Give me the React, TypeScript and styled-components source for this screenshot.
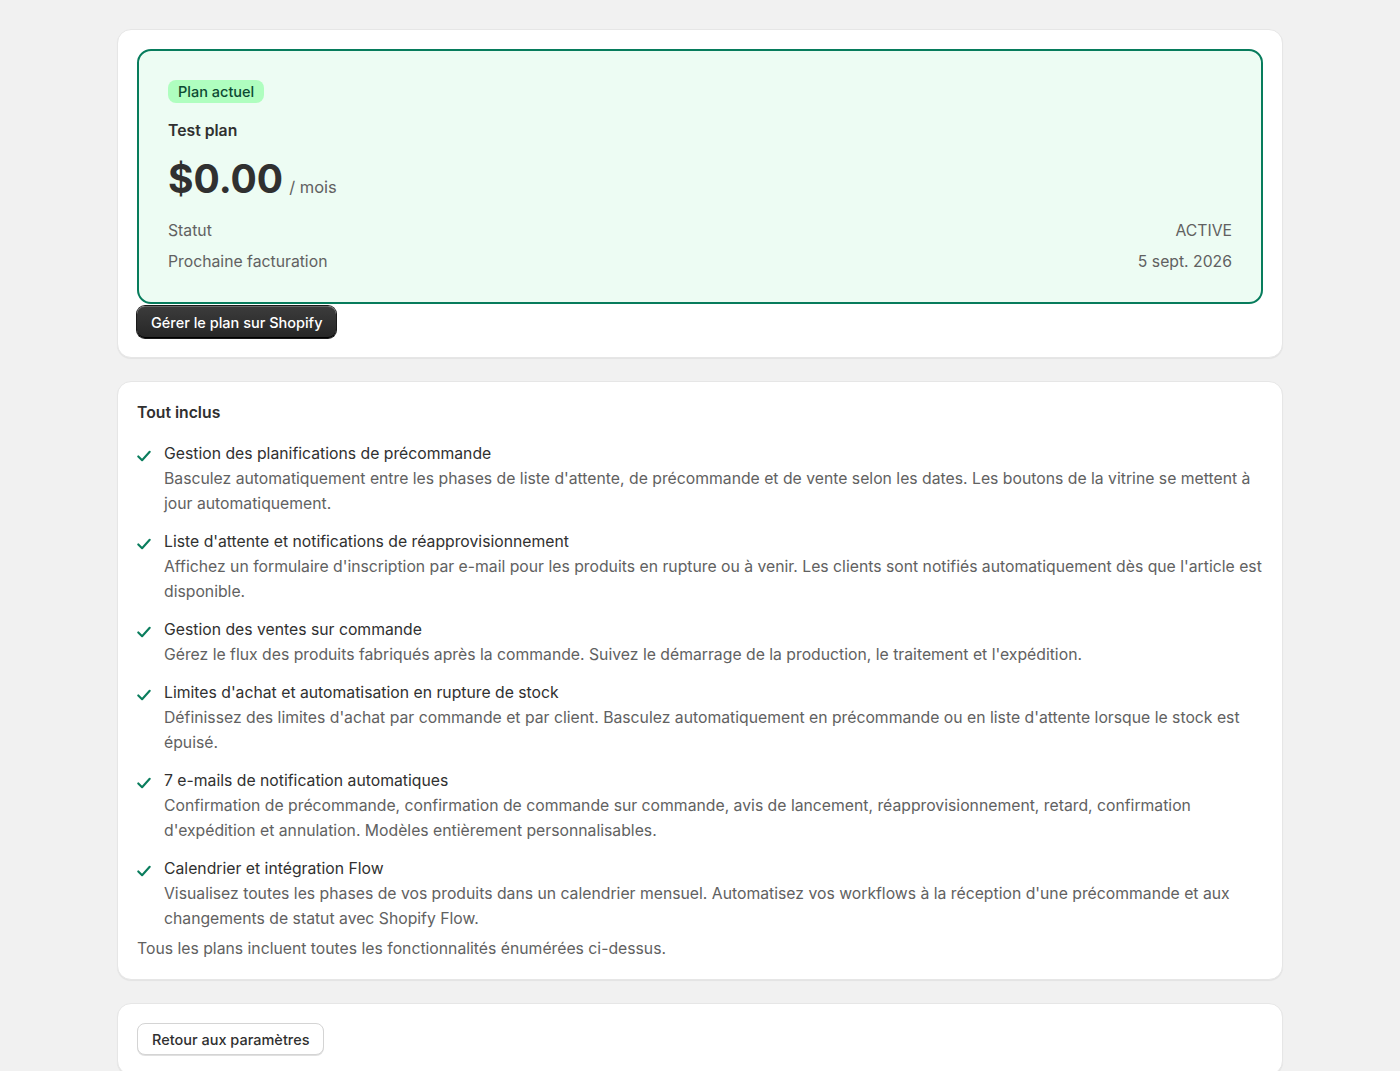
import React from 'react';
import styled, { createGlobalStyle } from 'styled-components';

const features = [
  {
    title: 'Gestion des planifications de précommande',
    text: "Basculez automatiquement entre les phases de liste d'attente, de précommande et de vente selon les dates. Les boutons de la vitrine se mettent à jour automatiquement.",
  },
  {
    title: "Liste d'attente et notifications de réapprovisionnement",
    text: "Affichez un formulaire d'inscription par e-mail pour les produits en rupture ou à venir. Les clients sont notifiés automatiquement dès que l'article est disponible.",
  },
  {
    title: 'Gestion des ventes sur commande',
    text: "Gérez le flux des produits fabriqués après la commande. Suivez le démarrage de la production, le traitement et l'expédition.",
  },
  {
    title: "Limites d'achat et automatisation en rupture de stock",
    text: "Définissez des limites d'achat par commande et par client. Basculez automatiquement en précommande ou en liste d'attente lorsque le stock est épuisé.",
  },
  {
    title: '7 e-mails de notification automatiques',
    text: "Confirmation de précommande, confirmation de commande sur commande, avis de lancement, réapprovisionnement, retard, confirmation d'expédition et annulation. Modèles entièrement personnalisables.",
  },
  {
    title: 'Calendrier et intégration Flow',
    text: "Visualisez toutes les phases de vos produits dans un calendrier mensuel. Automatisez vos workflows à la réception d'une précommande et aux changements de statut avec Shopify Flow.",
  },
];

const CheckIcon = () => (
  <svg width="14" height="14" viewBox="0 0 14 14" fill="none">
    <path d="M1.3 7.4L5.1 11.2L12.7 2.8" stroke="#0a7d5d" strokeWidth="2.1" strokeLinecap="round" strokeLinejoin="round" />
  </svg>
);

const App = () => {
  return (
    <>
      <GlobalStyle />
      <Page>
        <Card>
          <PlanBox>
            <Badge>Plan actuel</Badge>
            <PlanName>Test plan</PlanName>
            <PriceRow>
              <Price>$0.00</Price>
              <Period>/ mois</Period>
            </PriceRow>
            <InfoList>
              <InfoRow>
                <span>Statut</span>
                <span>ACTIVE</span>
              </InfoRow>
              <InfoRow>
                <span>Prochaine facturation</span>
                <span>5 sept. 2026</span>
              </InfoRow>
            </InfoList>
          </PlanBox>
          <PrimaryButton>Gérer le plan sur Shopify</PrimaryButton>
        </Card>

        <Card>
          <SectionTitle>Tout inclus</SectionTitle>
          <FeatureList>
            {features.map((item, index) => (
              <Feature key={index}>
                <IconCell>
                  <CheckIcon />
                </IconCell>
                <div>
                  <FeatureTitle>{item.title}</FeatureTitle>
                  <FeatureText>{item.text}</FeatureText>
                </div>
              </Feature>
            ))}
          </FeatureList>
          <Footnote>Tous les plans incluent toutes les fonctionnalités énumérées ci-dessus.</Footnote>
        </Card>

        <Card>
          <SecondaryButton>Retour aux paramètres</SecondaryButton>
        </Card>
      </Page>
    </>
  );
};

export default App;

// ========== Styled Components ==========

const GlobalStyle = createGlobalStyle`
  html, body {
    margin: 0;
    padding: 0;
    background: #f1f1f1;
    font-family: Inter, "Noto Sans", sans-serif;
    color: #303030;
  }
  * { box-sizing: border-box; }
`;

const Page = styled.div`
  width: 1166px;
  margin: 0 auto;
  padding-top: 29px;
  display: flex;
  flex-direction: column;
  gap: 23px;
`;

const Card = styled.div`
  background: #fff;
  border: 1px solid #e6e6e6;
  border-radius: 14px;
  box-shadow: 0 1px 1px rgba(0, 0, 0, 0.06);
  padding: 19px;
`;

const PlanBox = styled.div`
  background: #edfcf3;
  border: 2px solid #077c5c;
  border-radius: 14px;
  padding: 29px;
  display: flex;
  flex-direction: column;
  align-items: flex-start;
`;

const Badge = styled.span`
  display: inline-flex;
  align-items: center;
  height: 23px;
  padding: 0 10px;
  border-radius: 8px;
  background: #affebf;
  color: #0c4a33;
  font-size: 14.5px;
  font-weight: 500;
`;

const PlanName = styled.div`
  margin-top: 18px;
  font-size: 15.75px;
  line-height: 20px;
  font-weight: 600;
`;

const PriceRow = styled.div`
  margin-top: 10px;
  display: flex;
  align-items: baseline;
  gap: 6px;
`;

const Price = styled.span`
  font-size: 39px;
  line-height: 56px;
  font-weight: 700;
  color: #303030;
`;

const Period = styled.span`
  font-size: 16.5px;
  color: #616161;
`;

const InfoList = styled.div`
  align-self: stretch;
  margin-top: 13px;
  display: flex;
  flex-direction: column;
  gap: 9px;
`;

const InfoRow = styled.div`
  display: flex;
  justify-content: space-between;
  font-size: 15.75px;
  line-height: 22px;
  color: #616161;
`;

const PrimaryButton = styled.button`
  margin-top: 2px;
  height: 32px;
  padding: 0 14px;
  border: none;
  border-radius: 8px;
  background: linear-gradient(#3c3c3c, #262626);
  box-shadow: inset 0 1px 0 rgba(255, 255, 255, 0.22), inset 0 -1px 0 #000, 0 0 0 1px #1a1a1a;
  color: #fff;
  font-family: inherit;
  font-size: 14.5px;
  font-weight: 500;
`;

const SectionTitle = styled.div`
  font-size: 15.75px;
  line-height: 24px;
  font-weight: 600;
  color: #303030;
`;

const FeatureList = styled.div`
  margin-top: 16px;
  display: flex;
  flex-direction: column;
  gap: 13px;
`;

const Feature = styled.div`
  display: flex;
  gap: 13px;
`;

const IconCell = styled.div`
  width: 14px;
  flex-shrink: 0;
  padding-top: 6px;
`;

const FeatureTitle = styled.div`
  font-size: 15.75px;
  line-height: 25px;
  color: #303030;
`;

const FeatureText = styled.div`
  font-size: 15.75px;
  line-height: 25px;
  color: #616161;
`;

const Footnote = styled.div`
  margin-top: 7px;
  font-size: 15.75px;
  line-height: 22px;
  color: #616161;
`;

const SecondaryButton = styled.button`
  height: 32px;
  padding: 0 14px;
  border: 1px solid #d4d4d4;
  border-radius: 8px;
  background: #fff;
  box-shadow: 0 1px 0 rgba(0, 0, 0, 0.12);
  color: #303030;
  font-family: inherit;
  font-size: 14.5px;
  font-weight: 500;
`;
